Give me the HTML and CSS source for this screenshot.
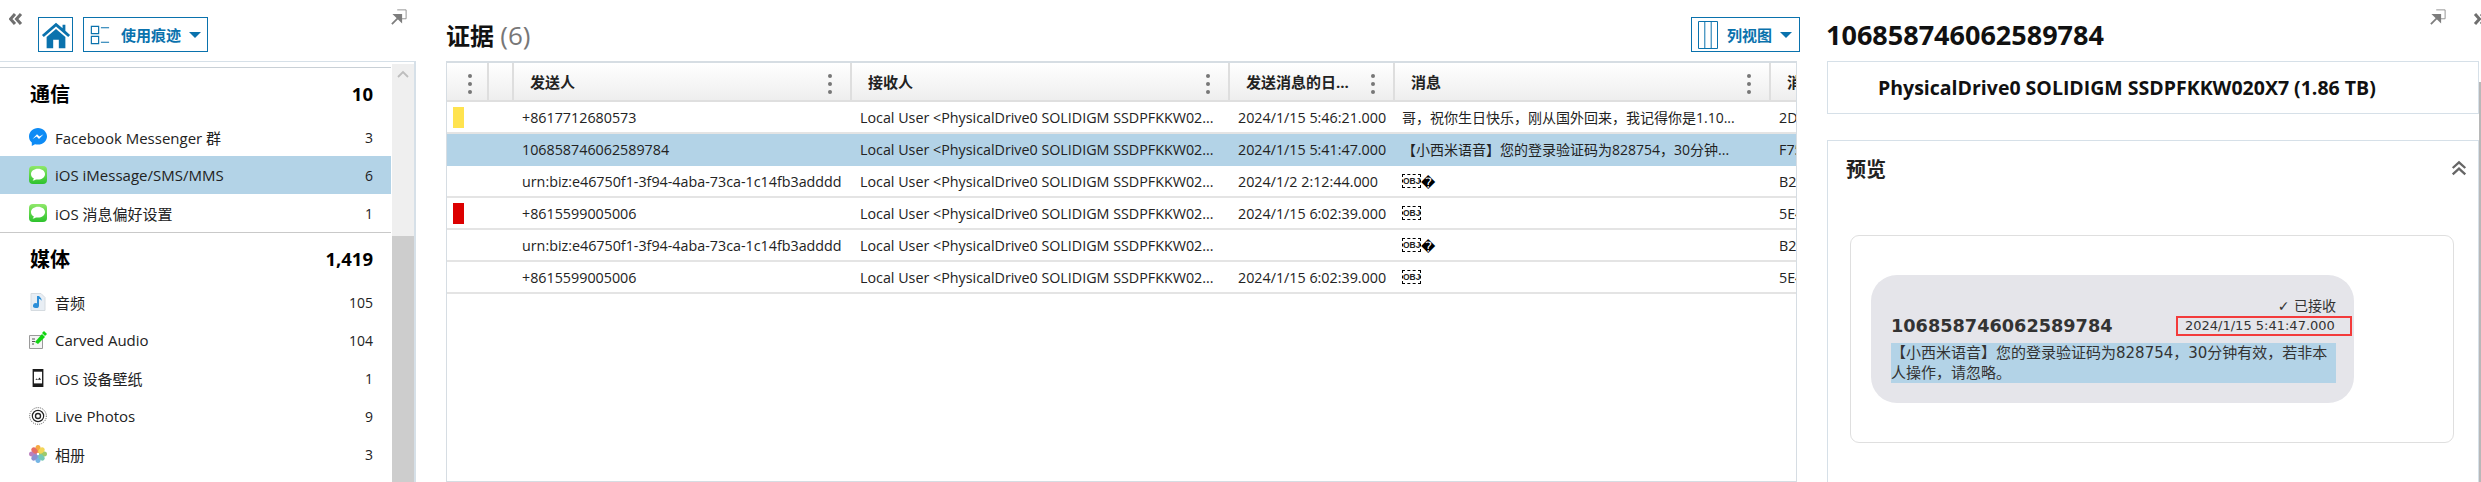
FILE: index.html
```html
<!DOCTYPE html>
<html lang="zh-CN">
<head>
  <meta charset="UTF-8" />
  <title>证据</title>
  <link rel="stylesheet" href="styles.css">
</head>
<body>
  <svg width="0" height="0" class="defs">
    <defs>
      <linearGradient id="msg-fill" x1="0" y1="0" x2="0" y2="1">
        <stop offset="0" stop-color="#8fe86a"/>
        <stop offset="1" stop-color="#2cc22c"/>
      </linearGradient>
      <g id="msg-icon">
        <rect width="18" height="18" rx="4" fill="url(#msg-fill)"/>
        <path d="M9 2.800c-3.900 0-7 2.400-7 5.400 0 1.800 1.100 3.400 2.900 4.400-.2.800-.7 1.500-1.300 2 1.200 0 2.300-.5 3.200-1.200.7.100 1.400.2 2.200.2 3.900 0 7-2.400 7-5.400S12.900 2.800 9 2.800z" fill="#fff"/>
      </g>
    </defs>
  </svg>

  <div class="app">

    <div class="left-panel">
      <div class="left-top">
        <svg class="collapse-icon" viewBox="0 0 14 12" width="14" height="12"><path d="M6 1 1.500 6 6 11M12 1 7.500 6 12 11" fill="none" stroke="#6f6f6f" stroke-width="3"/></svg>
        <div class="home-btn">
          <svg viewBox="0 0 32 32" width="30" height="30"><path d="M16 3 1 16l2 2L16 7l13 11 2-2-5-4.500V5h-3v3.800z" fill="#0a72ad"/><path d="M6 18 16 9.500 26 18v12h-7v-9h-6v9H6z" fill="#0a72ad"/></svg>
        </div>
        <div class="trace-btn">
          <svg viewBox="0 0 22 22" width="20" height="20"><path d="M1.500 1.500h8v8h-8zM1.500 12.500h8v8h-8zM12 3h9M12 19h9" fill="none" stroke="#0a72ad" stroke-width="1.300"/></svg>
          <span class="btn-label">使用痕迹</span>
          <span class="caret"></span>
        </div>
        <svg class="pin-icon pin-left" viewBox="0 0 18 18" width="16" height="16"><path d="M7 1h10v10h-6" fill="none" stroke="#8a8a8a" stroke-width="1"/><path d="M1 17l7-7M4 6.500h7.500V14z" fill="#7d7d7d" stroke="#7d7d7d" stroke-width="2"/></svg>
      </div>

      <div class="nav-box">
        <div class="nav-scroll">
          <div class="nav-section first">
            <div class="nav-head"><span>通信</span><span class="nav-count">10</span></div>
            <div class="nav-row">
              <svg class="nav-icon" viewBox="0 0 18 18"><path d="M9 0C4 0 0 3.700 0 8.500c0 2.500 1 4.600 2.800 6.100V18l3.200-1.800c1 .3 2 .4 3 .4 5 0 9-3.700 9-8.100S14 0 9 0z" fill="#0d8bf5"/><path d="M3.500 11 8 6.200l2.400 2.400 4.100-2.400L10 11 7.600 8.600z" fill="#fff"/></svg>
              <span class="nav-name">Facebook Messenger 群</span><span>3</span>
            </div>
            <div class="nav-row selected">
              <svg class="nav-icon" viewBox="0 0 18 18"><use href="#msg-icon"/></svg>
              <span class="nav-name">iOS iMessage/SMS/MMS</span><span>6</span>
            </div>
            <div class="nav-row">
              <svg class="nav-icon" viewBox="0 0 18 18"><use href="#msg-icon"/></svg>
              <span class="nav-name">iOS 消息偏好设置</span><span>1</span>
            </div>
          </div>
          <div class="nav-section">
            <div class="nav-head"><span>媒体</span><span class="nav-count">1,419</span></div>
            <div class="nav-row">
              <svg class="nav-icon" viewBox="0 0 18 18"><path d="M2 .5h10l4 4v13H2z" fill="#e8eef4" stroke="#d5dbe0"/><path d="M10 3v9.500a3 2.500 0 1 1-2-2.300V3z" fill="#2d8fd8"/><path d="M10 3c1.500 2 3 2.500 2.500 5-.5-1.500-1.500-2-2.500-2z" fill="#2d8fd8"/></svg>
              <span class="nav-name">音频</span><span>105</span>
            </div>
            <div class="nav-row">
              <svg class="nav-icon" viewBox="0 0 18 18"><path d="M.5 4.500h13v13H.5z" fill="#f4f4f4" stroke="#9a9a9a"/><path d="M3 8h3M3 10.500h3M3 13h2" stroke="#555" stroke-width="1"/><path d="M6 11 13 3l3 3-7 7z" fill="#12d512"/><path d="M13 2l2-2 3 3-2 2z" fill="#12d512"/></svg>
              <span class="nav-name">Carved Audio</span><span>104</span>
            </div>
            <div class="nav-row">
              <svg class="nav-icon" viewBox="0 0 18 20"><path d="M3 0h12v20H3z" fill="#1b1b1b"/><path d="M4.500 3h9v13h-9z" fill="#fff"/><path d="M6 12l1.500-1.500L9 12l1.500-2.500L12.500 12z" fill="#1b1b1b"/></svg>
              <span class="nav-name">iOS 设备壁纸</span><span>1</span>
            </div>
            <div class="nav-row">
              <svg class="nav-icon" viewBox="0 0 20 20"><circle cx="10" cy="10" r="9.300" fill="none" stroke="#222" stroke-width=".8" stroke-dasharray="1.200 1.200"/><circle cx="10" cy="10" r="6.300" fill="none" stroke="#222" stroke-width="1.300"/><circle cx="10" cy="10" r="2.800" fill="none" stroke="#222" stroke-width="1.500"/></svg>
              <span class="nav-name">Live Photos</span><span>9</span>
            </div>
            <div class="nav-row">
              <svg class="nav-icon" viewBox="0 0 18 18">
                <g opacity=".85">
                  <ellipse cx="9" cy="4" rx="2.700" ry="4" fill="#f59b22"/>
                  <ellipse cx="9" cy="14" rx="2.700" ry="4" fill="#5da9e0"/>
                  <ellipse cx="4" cy="9" rx="4" ry="2.700" fill="#b06bb5"/>
                  <ellipse cx="14" cy="9" rx="4" ry="2.700" fill="#8cc152"/>
                  <ellipse cx="5.500" cy="5.500" rx="3.500" ry="2.600" fill="#e2574c" transform="rotate(45 5.500 5.500)"/>
                  <ellipse cx="12.500" cy="5.500" rx="3.500" ry="2.600" fill="#f2d03b" transform="rotate(-45 12.500 5.500)"/>
                  <ellipse cx="5.500" cy="12.500" rx="3.500" ry="2.600" fill="#7a7fc8" transform="rotate(-45 5.500 12.500)"/>
                  <ellipse cx="12.500" cy="12.500" rx="3.500" ry="2.600" fill="#5fc0a8" transform="rotate(45 12.500 12.500)"/>
                </g>
              </svg>
              <span class="nav-name">相册</span><span>3</span>
            </div>
          </div>
        </div>
        <div class="nav-scrollbar">
          <svg class="scroll-up" viewBox="0 0 12 8" width="12" height="8"><path d="M1 7 6 2l5 5" fill="none" stroke="#bdbdbd" stroke-width="1.800"/></svg>
          <div class="scroll-thumb"></div>
        </div>
      </div>
    </div>

    <div class="center-panel">
      <div class="center-top">
        <div class="title">证据 <span class="title-count">(6)</span></div>
        <div class="view-btn">
          <svg viewBox="0 0 20 28" width="20" height="28"><path d="M.5.500h19v27H.5zM6.800.5v27M13.200.5v27" fill="none" stroke="#0a72ad" stroke-width="1"/></svg>
          <span class="btn-label">列视图</span>
          <span class="caret"></span>
        </div>
      </div>
      <div class="grid">
        <div class="row head">
          <div class="cell c-flag"><span class="dots"></span></div>
          <div class="cell c-icon"></div>
          <div class="cell c-from">发送人<span class="dots"></span></div>
          <div class="cell c-to">接收人<span class="dots"></span></div>
          <div class="cell c-date">发送消息的日...<span class="dots"></span></div>
          <div class="cell c-msg">消息<span class="dots"></span></div>
          <div class="cell c-id">消息 ID</div>
        </div>
        <div class="row">
          <div class="cell c-flag"><span class="flag yellow"></span></div>
          <div class="cell c-icon"></div>
          <div class="cell c-from">+8617712680573</div>
          <div class="cell c-to">Local User &lt;PhysicalDrive0 SOLIDIGM SSDPFKKW02...</div>
          <div class="cell c-date">2024/1/15 5:46:21.000</div>
          <div class="cell c-msg">哥，祝你生日快乐，刚从国外回来，我记得你是1.10...</div>
          <div class="cell c-id">2D</div>
        </div>
        <div class="row selected">
          <div class="cell c-flag"></div>
          <div class="cell c-icon"></div>
          <div class="cell c-from">106858746062589784</div>
          <div class="cell c-to">Local User &lt;PhysicalDrive0 SOLIDIGM SSDPFKKW02...</div>
          <div class="cell c-date">2024/1/15 5:41:47.000</div>
          <div class="cell c-msg">【小西米语音】您的登录验证码为828754，30分钟...</div>
          <div class="cell c-id">F75</div>
        </div>
        <div class="row">
          <div class="cell c-flag"></div>
          <div class="cell c-icon"></div>
          <div class="cell c-from">urn:biz:e46750f1-3f94-4aba-73ca-1c14fb3adddd</div>
          <div class="cell c-to">Local User &lt;PhysicalDrive0 SOLIDIGM SSDPFKKW02...</div>
          <div class="cell c-date">2024/1/2 2:12:44.000</div>
          <div class="cell c-msg"><span class="obj">OBJ</span><span class="bad-char">&#xFFFD;</span></div>
          <div class="cell c-id">B2</div>
        </div>
        <div class="row">
          <div class="cell c-flag"><span class="flag red"></span></div>
          <div class="cell c-icon"></div>
          <div class="cell c-from">+8615599005006</div>
          <div class="cell c-to">Local User &lt;PhysicalDrive0 SOLIDIGM SSDPFKKW02...</div>
          <div class="cell c-date">2024/1/15 6:02:39.000</div>
          <div class="cell c-msg"><span class="obj">OBJ</span></div>
          <div class="cell c-id">5E4</div>
        </div>
        <div class="row">
          <div class="cell c-flag"></div>
          <div class="cell c-icon"></div>
          <div class="cell c-from">urn:biz:e46750f1-3f94-4aba-73ca-1c14fb3adddd</div>
          <div class="cell c-to">Local User &lt;PhysicalDrive0 SOLIDIGM SSDPFKKW02...</div>
          <div class="cell c-date"></div>
          <div class="cell c-msg"><span class="obj">OBJ</span><span class="bad-char">&#xFFFD;</span></div>
          <div class="cell c-id">B2</div>
        </div>
        <div class="row">
          <div class="cell c-flag"></div>
          <div class="cell c-icon"></div>
          <div class="cell c-from">+8615599005006</div>
          <div class="cell c-to">Local User &lt;PhysicalDrive0 SOLIDIGM SSDPFKKW02...</div>
          <div class="cell c-date">2024/1/15 6:02:39.000</div>
          <div class="cell c-msg"><span class="obj">OBJ</span></div>
          <div class="cell c-id">5E4</div>
        </div>
      </div>
    </div>

    <div class="right-panel">
      <div class="right-top">
        <div class="right-title">106858746062589784</div>
        <svg class="pin-icon pin-right" viewBox="0 0 18 18" width="16" height="16"><path d="M7 1h10v10h-6" fill="none" stroke="#8a8a8a" stroke-width="1"/><path d="M1 17l7-7M4 6.500h7.500V14z" fill="#7d7d7d" stroke="#7d7d7d" stroke-width="2"/></svg>
        <svg class="collapse-right" viewBox="0 0 14 12" width="14" height="12"><path d="M2 1l4.500 5L2 11M8 1l4.500 5L8 11" fill="none" stroke="#6f6f6f" stroke-width="3"/></svg>
      </div>
      <div class="source-card">PhysicalDrive0 SOLIDIGM SSDPFKKW020X7 (1.86 TB)</div>
      <div class="preview-card">
        <div class="preview-head">
          <span>预览</span>
          <svg viewBox="0 0 14 14" width="16" height="16"><path d="M1.500 7 7 2l5.500 5M1.500 12.500 7 7.500l5.500 5" fill="none" stroke="#666" stroke-width="2"/></svg>
        </div>
        <div class="preview-box">
          <div class="bubble">
            <div class="bubble-status">&#x2713; 已接收</div>
            <div class="bubble-head">
              <span class="bubble-from">106858746062589784</span>
              <span class="bubble-date">2024/1/15 5:41:47.000</span>
            </div>
            <div class="bubble-text">【小西米语音】您的登录验证码为828754，30分钟有效，若非本人操作，请忽略。</div>
          </div>
        </div>
      </div>
      <div class="right-scrollbar"></div>
    </div>
  </div>
</body>
</html>
```

FILE: styles.css
```css
* {
  box-sizing: border-box;
}
html, body {
  margin: 0;
  height: 100%;
  overflow: hidden;
}
body {
  font-family: "Open Sans", "Noto Sans CJK SC", sans-serif;
  font-size: 14px;
  color: #222;
  background-color: #fff;
}
.app {
  display: flex;
  height: 482px;
}
.defs {
  position: absolute;
}

/* left panel */
.left-panel {
  width: 416px;
  flex: none;
  display: flex;
  flex-direction: column;
}
.left-top {
  height: 61px;
  display: flex;
  align-items: flex-start;
  padding: 13px 9px 0 9px;
}
.collapse-icon {
  margin-right: 15px;
}
.home-btn {
  width: 35px;
  height: 35px;
  margin-top: 4px;
  border: 1px solid #0a72ad;
  display: flex;
  align-items: center;
  justify-content: center;
}
.trace-btn {
  width: 125px;
  height: 35px;
  margin-top: 4px;
  margin-left: 10px;
  border: 1px solid #0a72ad;
  display: flex;
  align-items: center;
  padding-left: 6px;
}
.btn-label {
  font-weight: bold;
  color: #0a72ad;
  font-size: 15px;
  margin-left: 11px;
}
.caret {
  width: 0;
  height: 0;
  border-left: 6px solid transparent;
  border-right: 6px solid transparent;
  border-top: 6px solid #0a72ad;
  margin-left: 8px;
}
.pin-left {
  margin-left: auto;
  margin-top: -4px;
}
.nav-box {
  flex: 1;
  display: flex;
  border-top: 1px solid #d6e0e8;
  border-right: 2px solid #d6e0e8;
  min-height: 0;
  padding-top: 2px;
}
.nav-scroll {
  flex: 1;
  overflow: hidden;
}
.nav-section {
  border-bottom: 1px solid #c9c9c9;
}
.nav-section.first {
  border-top: 1px solid #c9d0d6;
  margin-top: 3px;
}
.nav-section:last-child {
  border-bottom: 0;
}
.nav-head {
  height: 50px;
  display: flex;
  justify-content: space-between;
  align-items: center;
  padding: 0 18px 0 30px;
  font-size: 20px;
  font-weight: bold;
  color: #000;
}
.nav-count {
  font-size: 18.500px;
}
.nav-row {
  height: 38px;
  display: flex;
  align-items: center;
  padding: 0 18px 0 29px;
  font-size: 14px;
  color: #222;
}
.nav-row.selected {
  background-color: #b3d3e7;
}
.nav-icon {
  width: 18px;
  height: 18px;
  flex: none;
  margin-right: 8px;
}
.nav-name {
  flex: 1;
  font-size: 15px;
}
.nav-scrollbar {
  width: 22px;
  flex: none;
  background-color: #efefef;
  display: flex;
  flex-direction: column;
  align-items: center;
  padding-top: 6px;
  margin-left: 1px;
}
.scroll-thumb {
  width: 100%;
  flex: 1;
  margin-top: 158px;
  background-color: #cdcdcd;
}

/* center panel */
.center-panel {
  width: 1383px;
  flex: none;
  padding-left: 30px;
  display: flex;
  flex-direction: column;
}
.center-top {
  height: 61px;
  display: flex;
  justify-content: space-between;
  padding-top: 17px;
}
.title {
  font-size: 24px;
  font-weight: bold;
  color: #111;
  line-height: 34px;
  margin-top: 1px;
}
.title-count {
  font-weight: normal;
  font-size: 26px;
  color: #777;
}
.view-btn {
  width: 109px;
  height: 35px;
  margin-right: -1px;
  border: 1px solid #0a72ad;
  display: flex;
  align-items: center;
  padding-left: 6px;
}
.view-btn svg {
  flex: none;
}
.view-btn .btn-label {
  margin-left: 9px;
}
.grid {
  flex: 1;
  width: 1351px;
  border: 1px solid #d6dde3;
  border-top-width: 2px;
  overflow: hidden;
}
.row {
  display: flex;
  height: 32px;
  border-bottom: 2px solid #e4e4e4;
  align-items: stretch;
  font-size: 14.300px;
}
.row.head {
  height: 39px;
  background-image: linear-gradient(#fff, #eeeeee);
  border-bottom: 2px solid #dfdfdf;
  font-weight: bold;
  font-size: 15px;
}
.row.selected {
  background-color: #b3d3e7;
  border-bottom-color: #b3d3e7;
}
.cell {
  position: relative;
  white-space: nowrap;
  overflow: hidden;
  display: flex;
  align-items: center;
  padding-left: 8px;
  flex: none;
}
.head .cell {
  padding-left: 16px;
  border-right: 2px solid #dedede;
}
.c-flag { width: 42px; }
.c-icon { width: 25px; }
.c-from { width: 338px; }
.c-to { width: 378px; }
.c-date { width: 165px; }
.c-msg { width: 376px; }
.row:not(.head) .c-msg {
  font-size: 14px;
  padding-left: 7px;
}
.c-id { width: 30px; }
.head .c-id { border-right: 0; }
.dots {
  position: absolute;
  right: 18px;
  top: 11px;
  width: 4px;
  height: 4px;
  border-radius: 50%;
  background-color: #777;
  box-shadow: 0 8px 0 #777, 0 16px 0 #777;
}
.head .c-flag .dots {
  right: 15px;
}
.flag {
  width: 11px;
  height: 21px;
  margin-left: -2px;
}
.flag.yellow { background-color: #ffe34f; }
.flag.red { background-color: #dc0000; }
.obj {
  width: 19px;
  height: 14px;
  border: 1px dashed #000;
  font-size: 8.500px;
  font-weight: bold;
  line-height: 12px;
  text-align: center;
  color: #222;
  font-family: "Liberation Sans", sans-serif;
}
.bad-char {
  font-family: "DejaVu Sans", sans-serif;
  font-size: 14px;
  color: #000;
  margin-top: 3px;
}

/* right panel */
.right-panel {
  flex: 1;
  position: relative;
  padding-left: 27px;
  min-width: 0;
  overflow: hidden;
}
.right-top {
  height: 61px;
  display: flex;
  align-items: flex-start;
  padding-top: 13px;
}
.right-title {
  font-size: 27px;
  font-weight: bold;
  color: #111;
  line-height: 44px;
}
.pin-right {
  margin-left: auto;
  margin-top: -4px;
  flex: none;
}
.collapse-right {
  flex: none;
  margin-left: 27px;
  margin-right: -6px;
}
.source-card {
  height: 53px;
  margin: 0 2px 0 1px;
  border: 1px solid #d6e0e8;
  display: flex;
  align-items: center;
  padding-left: 50px;
  font-size: 19.500px;
  font-weight: bold;
  color: #111;
  white-space: nowrap;
}
.preview-card {
  margin: 26px 2px 0 1px;
  height: 342px;
  border: 1px solid #d6e0e8;
  border-bottom: 0;
  padding: 0 24px 0 22px;
}
.preview-head {
  display: flex;
  justify-content: space-between;
  align-items: center;
  height: 54px;
  font-size: 20px;
  font-weight: bold;
  margin-left: -4px;
  margin-right: -13px;
}
.preview-box {
  margin-top: 40px;
  height: 208px;
  border: 1px solid #dfdfdf;
  border-radius: 9px;
  padding: 39px 0 0 20px;
}
.bubble {
  width: 483px;
  height: 128px;
  background-color: #e5e5ea;
  border-radius: 26px;
  padding: 22px 18px 0 20px;
  color: #333;
  font-family: "DejaVu Sans", "Noto Sans CJK SC", sans-serif;
}
.bubble-status {
  text-align: right;
  font-size: 14px;
  line-height: 18px;
}
.bubble-head {
  display: flex;
  justify-content: space-between;
  align-items: center;
  height: 21px;
  margin-right: -16px;
}
.bubble-from {
  font-size: 17.700px;
  font-weight: bold;
}
.bubble-date {
  width: 176px;
  height: 20px;
  border: 2px solid #f33b3b;
  font-size: 13px;
  line-height: 16px;
  padding-left: 7px;
  white-space: nowrap;
}
.bubble-text {
  margin-top: 7px;
  font-size: 15px;
  line-height: 20px;
  background-color: #b3d3e7;
}
.right-scrollbar {
  position: absolute;
  right: 0;
  top: 82px;
  bottom: 0;
  width: 2px;
  background-color: #b8b8b8;
}
```
